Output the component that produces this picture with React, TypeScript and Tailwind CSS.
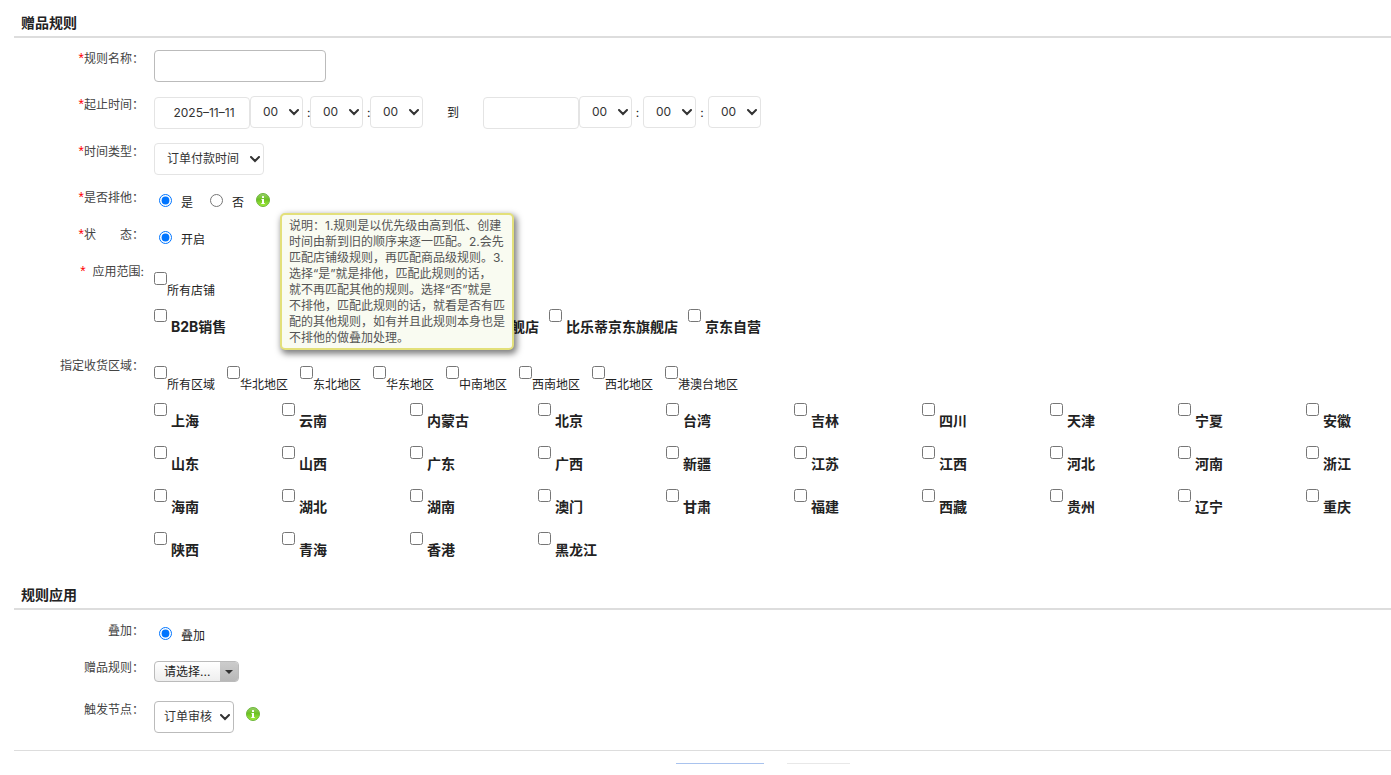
import { useState } from 'react';
import type { ReactNode } from 'react';

const HOURS = ['00', '01', '02', '03', '04', '05', '06', '07', '08', '09', '10', '11', '12'];

const SHOPS = ['B2B销售', '天猫自营', '比乐蒂天猫旗舰店', '比乐蒂京东旗舰店', '京东自营'];

const REGIONS = ['所有区域', '华北地区', '东北地区', '华东地区', '中南地区', '西南地区', '西北地区', '港澳台地区'];

const PROVINCES = [
  '上海', '云南', '内蒙古', '北京', '台湾', '吉林', '四川', '天津', '宁夏', '安徽',
  '山东', '山西', '广东', '广西', '新疆', '江苏', '江西', '河北', '河南', '浙江',
  '海南', '湖北', '湖南', '澳门', '甘肃', '福建', '西藏', '贵州', '辽宁', '重庆',
  '陕西', '青海', '香港', '黑龙江',
];

const HELP_LINES = [
  '说明：1.规则是以优先级由高到低、创建',
  '时间由新到旧的顺序来逐一匹配。2.会先',
  '匹配店铺级规则，再匹配商品级规则。3.',
  '选择“是”就是排他，匹配此规则的话，',
  '就不再匹配其他的规则。选择“否”就是',
  '不排他，匹配此规则的话，就看是否有匹',
  '配的其他规则，如有并且此规则本身也是',
  '不排他的做叠加处理。',
];

export default function App() {
  const [exclusive, setExclusive] = useState('yes');

  return (
    <main
      lang="zh-CN"
      className="overflow-hidden bg-white pl-[14px] font-['Inter','Noto_Sans_CJK_SC',sans-serif] text-[12px] leading-[18px] text-[#222]"
    >
      <SectionTitle>赠品规则</SectionTitle>
      <div className="pt-3">
        <Row label="规则名称：" htmlFor="name" required>
          <input id="name" type="text" className="block h-8 w-[172px] rounded-[4px] border border-[#bbb] px-2" />
        </Row>

        <Row label="起止时间：" htmlFor="start" required>
          <div className="flex h-[33px] items-start">
            <input
              id="start"
              type="text"
              defaultValue="2025–11–11"
              className="mt-px h-8 w-24 rounded-[4px] border border-[#e4e4e4] pb-[2px] pl-1 text-center text-[#333]"
            />
            <TimeSelect label="开始时" />
            <Colon className="w-[7px] pl-1" />
            <TimeSelect label="开始分" />
            <Colon className="w-[7px] pl-1" />
            <TimeSelect label="开始秒" />
            <span className="w-[60px] text-center leading-[34px]">到</span>
            <input
              type="text"
              aria-label="结束日期"
              className="mt-px h-8 w-24 rounded-[4px] border border-[#e4e4e4] pb-[2px] pl-1 text-center text-[#333]"
            />
            <TimeSelect label="结束时" />
            <Colon className="w-[11px]" />
            <TimeSelect label="结束分" />
            <Colon className="w-3" />
            <TimeSelect label="结束秒" />
          </div>
        </Row>

        <Row label="时间类型：" htmlFor="timeType" required>
          <Select id="timeType" className="w-[110px] border-[#e4e4e4] pl-3" options={['订单付款时间', '订单创建时间']} />
        </Row>

        <Row label="是否排他：" required>
          <div className="flex h-[23px] items-start pl-[5px]">
            <Radio name="exclusive" label="是" checked={exclusive === 'yes'} onChange={() => setExclusive('yes')} />
            <div className="w-[17px]" />
            <Radio name="exclusive" label="否" checked={exclusive === 'no'} onChange={() => setExclusive('no')} />
            <div className="relative ml-3 mt-1">
              <InfoIcon />
              <div
                role="tooltip"
                className="absolute left-6 top-5 z-10 w-[234px] whitespace-nowrap rounded-[5px] border-2 border-[#e3e07a] bg-[#f9fbf1] pb-[2px] pl-[7px] pt-[3px] leading-4 text-[#555] shadow-[2px_3px_6px_1px_rgba(0,0,0,0.5)]"
              >
                {HELP_LINES.map((line) => (
                  <div key={line}>{line}</div>
                ))}
              </div>
            </div>
          </div>
        </Row>

        <Row label="状　　态：" required>
          <div className="flex h-[23px] items-start pl-[5px]">
            <Radio name="status" label="开启" checked onChange={() => {}} />
          </div>
        </Row>

        <Row label="  应用范围:" required>
          <div className="flex h-[37px]">
            <Check label="所有店铺" />
          </div>
          <div className="flex h-[43px]">
            {SHOPS.map((shop) => (
              <div key={shop} className="min-w-32 pr-[10px]">
                <BoldCheck label={shop} />
              </div>
            ))}
          </div>
        </Row>

        <Row label="指定收货区域：">
          <div className="flex h-[37px] gap-3">
            {REGIONS.map((region) => (
              <Check key={region} label={region} />
            ))}
          </div>
          <div className="grid auto-rows-[35px] grid-cols-[repeat(9,128px)_1fr] gap-y-2">
            {PROVINCES.map((province) => (
              <BoldCheck key={province} label={province} />
            ))}
          </div>
        </Row>
      </div>

      <SectionTitle>规则应用</SectionTitle>
      <div className="border-b border-[#ddd] pb-[3px] pt-3">
        <Row label="叠加：">
          <div className="flex h-[23px] items-start pl-[5px]">
            <Radio name="stack" label="叠加" checked onChange={() => {}} />
          </div>
        </Row>

        <Row label="赠品规则：">
          <div className="h-7 pt-[2px]">
            <button
              type="button"
              className="flex h-[21px] w-[85px] overflow-hidden rounded-[4px] border border-[#bbb] bg-linear-to-b from-white to-[#eee] leading-[19px]"
            >
              <span className="flex-1 pl-[9px] text-left">请选择...</span>
              <span className="flex h-full w-[18px] items-center justify-center bg-linear-to-b from-[#ccc] to-[#b8b8b8]">
                <svg width="8" height="4" viewBox="0 0 8 4">
                  <path d="M0 0h8L4 4z" fill="#333" />
                </svg>
              </span>
            </button>
          </div>
        </Row>

        <Row label="触发节点：" htmlFor="node">
          <div className="flex items-start">
            <Select id="node" className="w-20 border-[#bbb] pl-[9px]" options={['订单审核', '订单创建']} />
            <div className="ml-3 mt-[6px]">
              <InfoIcon />
            </div>
          </div>
        </Row>
      </div>

      {/* Footer buttons, only the top edge is in view */}
      <div className="mt-3 flex h-px items-start gap-[23px] overflow-hidden pl-[662px]">
        <button type="button" aria-label="保存" className="h-8 w-[88px] shrink-0 border-t border-[#a9c3ee] bg-[#4d90fe]" />
        <button type="button" aria-label="取消" className="h-8 w-[63px] shrink-0 border-t border-[#e8e8e8] bg-[#f5f5f5]" />
      </div>
    </main>
  );
}

function SectionTitle({ children }: { children: ReactNode }) {
  return (
    <h2 className="border-b-2 border-[#ddd] pb-[2px] pl-[7px] pt-3 text-[14px] font-bold leading-[22px]">{children}</h2>
  );
}

type RowProps = { label: string; htmlFor?: string; required?: boolean; children: ReactNode };

function Row({ label, htmlFor, required, children }: RowProps) {
  return (
    <div className="flex pb-[14px]">
      <label htmlFor={htmlFor} className="w-[130px] shrink-0 whitespace-pre text-right text-[#444]">
        {required && <span className="font-['Liberation_Sans',sans-serif] text-[14px] leading-none text-[#f00]">*</span>}
        {label}
      </label>
      <div className="min-w-0 flex-1 pl-[10px]">{children}</div>
    </div>
  );
}

type SelectProps = { id?: string; label?: string; className: string; options: string[] };

function Select({ id, label, className, options }: SelectProps) {
  return (
    <div className="relative w-fit shrink-0">
      <select id={id} aria-label={label} className={`block h-8 appearance-none rounded-[4px] border bg-white text-[#333] ${className}`}>
        {options.map((option) => (
          <option key={option}>{option}</option>
        ))}
      </select>
      <svg className="pointer-events-none absolute right-1 top-[13px]" width="10" height="7" viewBox="0 0 10 7">
        <path d="M1 1l4 4 4-4" fill="none" stroke="#333" strokeWidth="2" strokeLinecap="round" />
      </svg>
    </div>
  );
}

function TimeSelect({ label }: { label: string }) {
  return <Select label={label} className="w-[53px] border-[#e4e4e4] pl-3" options={HOURS} />;
}

function Colon({ className }: { className: string }) {
  return <span className={`text-center leading-[34px] ${className}`}>:</span>;
}

type RadioProps = { name: string; label: string; checked: boolean; onChange: () => void };

function Radio({ name, label, checked, onChange }: RadioProps) {
  return (
    <label className="flex items-start gap-[9px]">
      <input type="radio" name={name} checked={checked} onChange={onChange} className="mt-[5px] size-[13px]" />
      <span className="mt-[5px]">{label}</span>
    </label>
  );
}

function Check({ label }: { label: string }) {
  return (
    <label className="flex items-start whitespace-nowrap">
      <input type="checkbox" className="mt-[9px] size-[13px]" />
      <span className="mt-[19px]">{label}</span>
    </label>
  );
}

function BoldCheck({ label }: { label: string }) {
  return (
    <label className="flex items-start gap-1 whitespace-nowrap text-[14px] font-bold">
      <input type="checkbox" className="mt-[9px] size-[13px]" />
      <span className="mt-[18px]">{label}</span>
    </label>
  );
}

function InfoIcon() {
  return (
    <svg className="block" width="14" height="14" viewBox="0 0 14 14">
      <defs>
        <linearGradient id="infoFill" x1="0" y1="0" x2="0" y2="1">
          <stop offset="0" stopColor="#9ad06c" />
          <stop offset="0.45" stopColor="#6cc122" />
          <stop offset="1" stopColor="#a4ee3c" />
        </linearGradient>
      </defs>
      <circle cx="7" cy="7" r="6.5" fill="url(#infoFill)" stroke="#6db63c" />
      <rect x="6" y="3" width="2" height="2" rx="0.5" fill="#fff" />
      <path d="M5.5 6H8v4h.7v1H5.3v-1H6V7h-.5z" fill="#fff" />
    </svg>
  );
}
